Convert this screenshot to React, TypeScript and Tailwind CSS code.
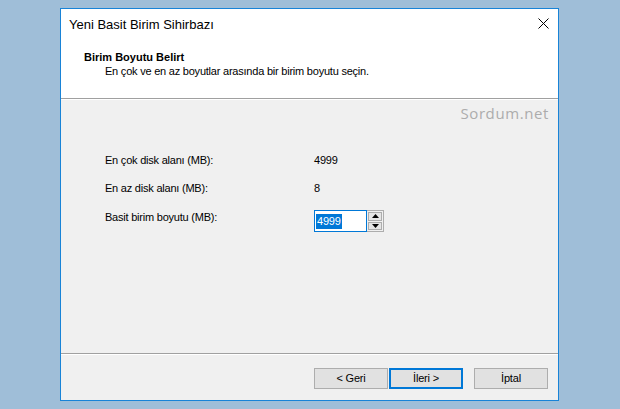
import React from "react";

const font = { fontFamily: '"Liberation Sans", Arial, sans-serif' };

function CloseIcon() {
  return (
    <svg width="11" height="11" viewBox="0 0 11 11" className="block">
      <path d="M0.5 0.5 L10.5 10.5 M10.5 0.5 L0.5 10.5" stroke="#000" strokeWidth="1" fill="none" />
    </svg>
  );
}

function Arrow({ down }: { down?: boolean }) {
  return (
    <svg width="7" height="4" viewBox="0 0 7 4" className="block">
      <path d={down ? "M0 0 H7 L3.5 4 Z" : "M0 4 H7 L3.5 0 Z"} fill="#000" />
    </svg>
  );
}

function SpinBox() {
  return (
    <div className="flex h-[22px]">
      <div className="flex h-[22px] w-[53px] items-center border border-[#0078d7] bg-white pl-[1px]">
        <span className="bg-[#0078d7] px-[1px] text-[11px] leading-[15px] text-white">4999</span>
      </div>
      <div className="flex h-[22px] w-[17px] flex-col gap-[1px] border border-l-0 border-[#adadad] bg-[#f0f0f0] p-[1px]">
        <div className="flex flex-1 items-center justify-center border border-[#adadad] bg-[#e5e5e5]">
          <Arrow />
        </div>
        <div className="flex flex-1 items-center justify-center border border-[#adadad] bg-[#e5e5e5]">
          <Arrow down />
        </div>
      </div>
    </div>
  );
}

function Button({ label, primary }: { label: string; primary?: boolean }) {
  return (
    <button
      type="button"
      className={
        "flex h-[21px] w-[74px] items-center justify-center bg-[#e1e1e1] text-[11px] tracking-[-0.2px] text-black " +
        (primary ? "border-2 border-[#0078d7]" : "border border-[#adadad]")
      }
    >
      {label}
    </button>
  );
}

export default function App() {
  return (
    <div className="h-[409px] w-[620px] bg-[#9fbed8] pl-[60px] pt-[8px]" style={font}>
      <div className="flex h-[393px] w-[499px] flex-col border border-[#1883d7] bg-white">
        {/* title bar */}
        <div className="flex h-[31px] items-center justify-between pl-[8px] pr-[9px]">
          <span className="text-[13px] text-black">Yeni Basit Birim Sihirbazı</span>
          <span className="-mt-[3px]">
            <CloseIcon />
          </span>
        </div>

        {/* wizard header */}
        <div className="h-[58px] pl-[23px] pt-[10px] text-[11px] leading-[14px] text-black">
          <div className="font-bold">Birim Boyutu Belirt</div>
          <div className="pl-[21px] tracking-[-0.22px]">En çok ve en az boyutlar arasında bir birim boyutu seçin.</div>
        </div>
        <div className="h-px bg-[#a0a0a0]" />
        <div className="h-px bg-white" />

        {/* page body */}
        <div className="flex flex-1 flex-col bg-[#f0f0f0] pl-[44px] pr-[9px] pt-[3px] text-[11px] leading-[14px] tracking-[-0.22px] text-black">
          <div
            className="self-end text-[15px] leading-[20px] tracking-[0.6px] text-[#acacac]"
            style={{ fontFamily: '"Open Sans", sans-serif' }}
          >
            Sordum.net
          </div>
          <div className="mt-[30px] grid grid-cols-[209px_1fr] gap-y-[14px]">
            <span>En çok disk alanı (MB):</span>
            <span>4999</span>
            <span>En az disk alanı (MB):</span>
            <span>8</span>
          </div>
          <div className="mt-[15px] grid grid-cols-[209px_1fr]">
            <span>Basit birim boyutu (MB):</span>
            <SpinBox />
          </div>
        </div>

        {/* footer */}
        <div className="h-px bg-[#a0a0a0]" />
        <div className="h-px bg-white" />
        <div className="flex h-[45px] justify-end bg-[#f0f0f0] pr-[10px] pt-[13px]">
          <div className="flex gap-[1px]">
            <Button label="< Geri" />
            <Button label="İleri >" primary />
          </div>
          <div className="ml-[11px]">
            <Button label="İptal" />
          </div>
        </div>
      </div>
    </div>
  );
}
